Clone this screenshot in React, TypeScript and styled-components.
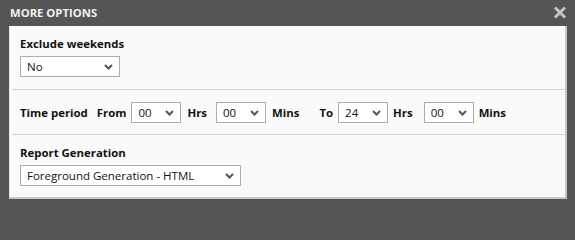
import { FC } from "react";
import styled, { createGlobalStyle } from "styled-components";

const GlobalStyle = createGlobalStyle`
  html, body {
    margin: 0;
    padding: 0;
    background: #555555;
  }
  body {
    font-family: "Open Sans", "DejaVu Sans", sans-serif;
    font-size: 11.4px;
  }
`;

const Dialog = styled.div`
  width: 575px;
  height: 207px;
  box-sizing: border-box;
  padding: 0 8px 8px 9px;
  background: #555555;
  display: flex;
  flex-direction: column;
`;

const Header = styled.div`
  height: 26px;
  display: flex;
  align-items: center;
  justify-content: space-between;
  padding-left: 1px;
`;

const Title = styled.div`
  color: #f2f2f2;
  font-weight: 700;
  font-size: 11.3px;
  margin-top: -2px;
`;

const CloseButton = styled.button`
  border: 0;
  background: none;
  padding: 0;
  margin-right: -1px;
  margin-top: -1px;
  width: 16px;
  height: 16px;
  display: flex;
  align-items: center;
  justify-content: center;
  cursor: pointer;
`;

const Panel = styled.div`
  flex: 1;
  background: #fafafa;
  border-left: 1px solid #e4e4e4;
  border-right: 2px solid #c8c8c8;
  border-bottom: 2px solid #c8c8c8;
  display: flex;
  flex-direction: column;
`;

const Section = styled.div<{ $last?: boolean }>`
  margin-left: 2px;
  padding: 10px 0 0 8px;
  border-bottom: ${(p) => (p.$last ? "0" : "1px solid #d2d2d2")};
  flex: ${(p) => (p.$last ? "1" : "none")};
`;

const StackSection = styled(Section)<{ $height: number }>`
  height: ${(p) => p.$height}px;
  box-sizing: border-box;
  display: flex;
  flex-direction: column;
  gap: 5px;
`;

const RowSection = styled(Section)`
  height: 45px;
  box-sizing: border-box;
  padding-top: 1px;
  display: flex;
  align-items: center;
`;

const Label = styled.span<{ $gap?: number }>`
  font-weight: 700;
  color: #111;
  font-size: 11.4px;
  margin-right: ${(p) => p.$gap ?? 0}px;
  white-space: nowrap;
`;

const SelectWrap = styled.div<{ $width: number; $gap?: number }>`
  position: relative;
  width: ${(p) => p.$width}px;
  height: 21px;
  margin-right: ${(p) => p.$gap ?? 0}px;
  flex: none;
`;

const NativeSelect = styled.select`
  appearance: none;
  -webkit-appearance: none;
  width: 100%;
  height: 100%;
  box-sizing: border-box;
  border: 1px solid #a9adb8;
  border-radius: 0;
  background: #ffffff;
  font-family: "Open Sans", "DejaVu Sans", sans-serif;
  font-size: 11.5px;
  color: #111;
  padding: 0 20px 1px 6px;
  outline: none;
`;

const Chevron = styled.svg`
  position: absolute;
  right: 7px;
  top: 8px;
  pointer-events: none;
`;

type SelectProps = {
  width: number;
  gap?: number;
  value: string;
  options: string[];
};

const Select: FC<SelectProps> = ({ width, gap, value, options }) => (
  <SelectWrap $width={width} $gap={gap}>
    <NativeSelect defaultValue={value}>
      {options.map((o) => (
        <option key={o}>{o}</option>
      ))}
    </NativeSelect>
    <Chevron width="9" height="6" viewBox="0 0 9 6">
      <path d="M1 1 L4.5 4.5 L8 1" fill="none" stroke="#555" strokeWidth="2" />
    </Chevron>
  </SelectWrap>
);

const hours = Array.from({ length: 25 }, (_, i) => String(i).padStart(2, "0"));
const minutes = Array.from({ length: 60 }, (_, i) => String(i).padStart(2, "0"));

export default function App() {
  return (
    <>
      <GlobalStyle />
      <Dialog>
        <Header>
          <Title>MORE OPTIONS</Title>
          <CloseButton aria-label="Close">
            <svg width="14" height="13" viewBox="0 0 14 13">
              <path d="M2 1.5 L12 11.5 M12 1.5 L2 11.5" stroke="#c4c4c4" strokeWidth="3" />
            </svg>
          </CloseButton>
        </Header>
        <Panel>
          <StackSection $height={64}>
            <Label>Exclude weekends</Label>
            <Select width={100} value="No" options={["No", "Yes"]} />
          </StackSection>
          <RowSection>
            <Label $gap={9}>Time period</Label>
            <Label $gap={5}>From</Label>
            <Select width={50} gap={6} value="00" options={hours} />
            <Label $gap={9}>Hrs</Label>
            <Select width={50} gap={6} value="00" options={minutes} />
            <Label $gap={20}>Mins</Label>
            <Label $gap={5}>To</Label>
            <Select width={50} gap={5} value="24" options={hours} />
            <Label $gap={11}>Hrs</Label>
            <Select width={50} gap={5} value="00" options={minutes} />
            <Label>Mins</Label>
          </RowSection>
          <StackSection $last $height={62}>
            <Label>Report Generation</Label>
            <Select
              width={221}
              value="Foreground Generation - HTML"
              options={["Foreground Generation - HTML", "Background Generation - PDF"]}
            />
          </StackSection>
        </Panel>
      </Dialog>
    </>
  );
}
